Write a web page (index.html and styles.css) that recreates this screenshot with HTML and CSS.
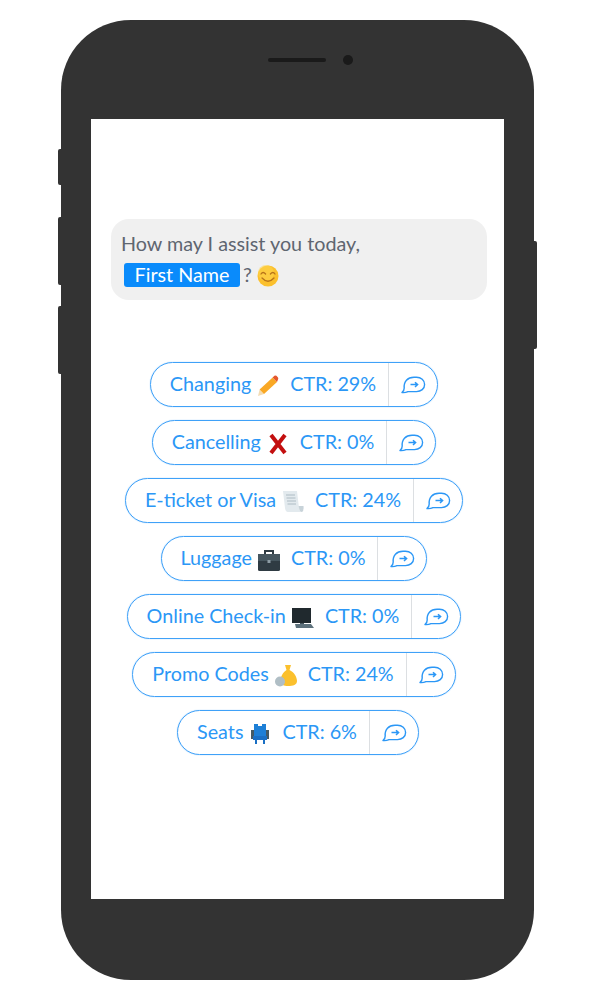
FILE: index.html
```html
<!DOCTYPE html>
<html lang="en">
<head>
  <meta charset="UTF-8" />
  <title>Chat preview</title>
  <link rel="stylesheet" href="styles.css">
</head>
<body>
  <svg class="defs" width="0" height="0" aria-hidden="true">
    <symbol id="send" viewBox="0 0 26 18">
      <path d="M2 16.6 C3.6 15 4.3 13.6 4.2 12 C3.6 5.5 7.5 1.3 14 1.2 L16.5 1.2 C21 1.2 24.6 4.2 24.6 8.4 C24.6 12.8 21 15.6 16.5 15.6 L8 15.6 C6 16.6 4 16.8 2 16.6 Z" fill="none" stroke="currentColor" stroke-width="1.4" stroke-linejoin="round"/>
      <path d="M10.5 8.6 H17.5 M15 6.2 L17.6 8.6 L15 11" fill="none" stroke="currentColor" stroke-width="1.5"/>
    </symbol>
  </svg>

  <div class="phone">
    <span class="side side-mute"></span>
    <span class="side side-up"></span>
    <span class="side side-down"></span>
    <span class="side side-power"></span>

    <div class="earpiece">
      <span class="speaker"></span>
      <span class="camera"></span>
    </div>

    <div class="screen">
      <div class="bubble">
        <div>How may I assist you today,</div>
        <div class="bubble-line">
          <span class="chip">First Name</span>
          <span class="mark">?</span>
          <svg class="emoji" viewBox="0 0 22 22">
            <circle cx="11" cy="11" r="10.5" fill="#fbc02d"/>
            <circle cx="9" cy="8" r="8" fill="#ffd54f" opacity=".55"/>
            <path d="M4 9 Q6 6 8.6 9 M13.4 9 Q16 6 18 9" fill="none" stroke="#b8741a" stroke-width="1.3" stroke-linecap="round"/>
            <path d="M5 13 Q11 19.5 17 13" fill="none" stroke="#b8741a" stroke-width="1.3" stroke-linecap="round"/>
          </svg>
        </div>
      </div>

      <div class="replies">
        <div class="reply">
          <div class="reply-label">Changing
            <svg class="emoji" viewBox="0 0 22 22">
              <path d="M1 21 L2.6 14.6 L7 19 Z" fill="#f3dcb4"/>
              <path d="M2.6 14.6 L15.6 2.4 L20 7 L7 19 Z" fill="#f9a825"/>
              <path d="M15.6 2.4 L17.4 .8 Q18.4 0 19.4 .8 L21 2.6 Q21.6 3.6 21 4.4 L20 7 Z" fill="#e4572e"/>
            </svg>
            CTR: 29%</div>
          <div class="reply-send"><svg class="send-icon"><use href="#send"/></svg></div>
        </div>
        <div class="reply">
          <div class="reply-label">Cancelling
            <svg class="emoji" viewBox="0 0 22 22">
              <path d="M4 2 L18 20 M18 2 L4 20" stroke="#c30f0f" stroke-width="4" fill="none"/>
            </svg>
            CTR: 0%</div>
          <div class="reply-send"><svg class="send-icon"><use href="#send"/></svg></div>
        </div>
        <div class="reply">
          <div class="reply-label">E-ticket or Visa
            <svg class="emoji" viewBox="0 0 22 22">
              <path d="M1 0 H15 L17 17 Q17.5 21 20 21 H6 Q3.5 21 3 17 Z" fill="#e3eaee"/>
              <path d="M16.5 15 H21.5 Q22 20 20 21 Q17.5 21 17 17 Z" fill="#c8d3d9"/>
              <path d="M4 4 H13 M4.5 7 H13.5 M5 10 H14 M5.5 13 H14" stroke="#aebcc4" stroke-width="1"/>
            </svg>
            CTR: 24%</div>
          <div class="reply-send"><svg class="send-icon"><use href="#send"/></svg></div>
        </div>
        <div class="reply">
          <div class="reply-label">Luggage
            <svg class="emoji" viewBox="0 0 22 22">
              <path d="M7 6 V2 H15 V6" fill="none" stroke="#2f3b43" stroke-width="2"/>
              <rect x="0" y="5" width="22" height="17" rx="1.5" fill="#2f3b43"/>
              <rect x="0" y="5" width="22" height="7" fill="#46565f"/>
              <rect x="9.5" y="11" width="3" height="3" fill="#8d9ca5"/>
            </svg>
            CTR: 0%</div>
          <div class="reply-send"><svg class="send-icon"><use href="#send"/></svg></div>
        </div>
        <div class="reply">
          <div class="reply-label">Online Check-in
            <svg class="emoji" viewBox="0 0 22 22">
              <rect x="0" y="1" width="19" height="15" fill="#20292e"/>
              <rect x="8" y="16" width="4" height="2" fill="#46565f"/>
              <path d="M3 17 H19 L22 21 H4 Z" fill="#5d717c"/>
            </svg>
            CTR: 0%</div>
          <div class="reply-send"><svg class="send-icon"><use href="#send"/></svg></div>
        </div>
        <div class="reply">
          <div class="reply-label">Promo Codes
            <svg class="emoji" viewBox="0 0 22 22">
              <path d="M10 0 L16 0 L14.5 5 C19 7 22 12 22 16 C22 20 18 21 13 21 C9 21 6 20 5.500 16 C5.500 12 8 7 11.500 5 Z" fill="#fbc02d"/>
              <circle cx="5" cy="16.5" r="5" fill="#b0bec5"/>
            </svg>
            CTR: 24%</div>
          <div class="reply-send"><svg class="send-icon"><use href="#send"/></svg></div>
        </div>
        <div class="reply reply-seats">
          <div class="reply-label">Seats
            <svg class="emoji" viewBox="0 0 22 22">
              <path d="M5 1 H9 V3 H13 V1 H17 V13 H5 Z" fill="#1e7fd6"/>
              <rect x="2" y="7" width="3" height="9" fill="#455a64"/>
              <rect x="17" y="7" width="3" height="9" fill="#455a64"/>
              <path d="M4 13 H18 V17 H16 V21 H14 V17 H8 V21 H6 V17 H4 Z" fill="#1a6fc4"/>
            </svg>
            CTR: 6%</div>
          <div class="reply-send"><svg class="send-icon"><use href="#send"/></svg></div>
        </div>
      </div>
    </div>
  </div>
</body>
</html>
```

FILE: styles.css
```css
* {
  box-sizing: border-box;
}
body {
  margin: 0;
  background-color: #fff;
  font-family: "Lato", "Open Sans", sans-serif;
  font-size: 19.75px;
}
.defs {
  position: absolute;
}
.phone {
  position: relative;
  width: 473px;
  height: 960px;
  margin: 20px 0 20px 61px;
  padding-left: 30px;
  background-color: #333;
  border-radius: 70px;
}
.side {
  position: absolute;
  width: 3px;
  background-color: #333;
  border-radius: 2px 0 0 2px;
}
.side-mute {
  left: -3px;
  top: 129px;
  height: 36px;
}
.side-up {
  left: -3px;
  top: 197px;
  height: 68px;
}
.side-down {
  left: -3px;
  top: 286px;
  height: 68px;
}
.side-power {
  right: -3px;
  top: 221px;
  height: 108px;
  border-radius: 0 2px 2px 0;
}
.earpiece {
  display: flex;
  align-items: center;
  gap: 17px;
  height: 99px;
  padding: 0 0 19px 177px;
}
.speaker {
  width: 58px;
  height: 4px;
  background-color: #1a1a1a;
  border-radius: 2px;
}
.camera {
  width: 10px;
  height: 10px;
  background-color: #1a1a1a;
  border-radius: 50%;
}
.screen {
  width: 413px;
  height: 780px;
  padding-top: 100px;
  background-color: #fff;
}
.bubble {
  width: 376px;
  height: 81px;
  margin-left: 20px;
  padding: 10px 10px;
  background-color: #f0f0f0;
  border-radius: 18px;
  color: #5f6670;
  line-height: 30px;
}
.bubble-line {
  display: flex;
  align-items: center;
  margin-top: 1px;
}
.chip {
  width: 116px;
  height: 24px;
  margin: 0 3px;
  background-color: #0a8bfb;
  border-radius: 3px;
  color: #fff;
  line-height: 23px;
  text-align: center;
}
.mark {
  margin-right: 5px;
}
.replies {
  display: flex;
  flex-direction: column;
  align-items: center;
  gap: 13px;
  margin-top: 62px;
  padding-right: 7px;
}
.reply {
  display: flex;
  height: 45px;
  border: 1px solid #3fa1f8;
  border-radius: 23px;
  box-shadow: 0 0 1px #62b1f9;
  color: #2b97f6;
}
.reply-seats {
  margin-left: 8px;
}
.reply-label {
  display: flex;
  align-items: center;
  padding: 0 12px 2px 19px;
  white-space: nowrap;
}
.emoji {
  flex: none;
  width: 22px;
  height: 22px;
  margin: 5px 11px 0 6px;
}
.bubble-line .emoji {
  margin: 2px 0 0;
}
.reply-send {
  display: flex;
  align-items: center;
  justify-content: center;
  width: 49px;
  border-left: 1px solid #dcdfe2;
}
.send-icon {
  width: 26px;
  height: 18px;
}
```
